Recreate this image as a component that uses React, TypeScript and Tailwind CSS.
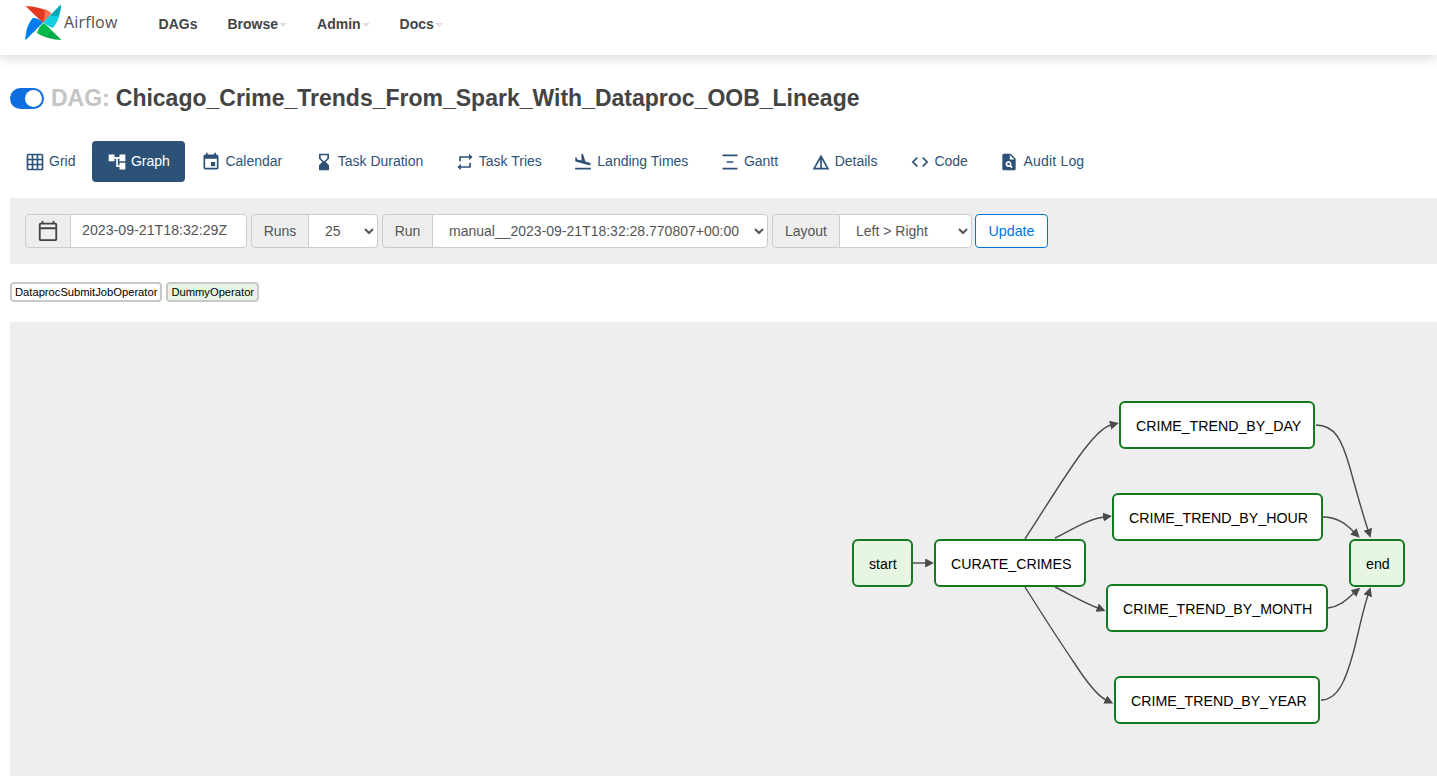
import { MdAccountTree, MdCode, MdDetails, MdEvent, MdFlightLand, MdGridOn, MdHourglassBottom, MdOutlineCalendarToday, MdPlagiarism, MdRepeat } from "react-icons/md";

function GanttIcon({ className }: { className?: string }) {
  return (
    <svg viewBox="0 0 24 24" className={className} fill="currentColor">
      <path d="M3 3h18v2H3zM3 19h18v2H3zM8 11h8v2H8z" />
    </svg>
  );
}

function Logo() {
  return (
    <svg viewBox="0 0 38 37" className="h-[37px] w-[38px]">
      <path d="M0.5 2 L18 19 C21 16 24 12 26 9 C20 5 9 2 0.5 2 Z" fill="#e43921" />
      <path d="M18 19 C21 16 24 12 26 9 C24 7 22 6 20 5 C20 10 19 15 18 19 Z" fill="#f4725a" />
      <path d="M36 0.5 L18.5 18 C21 21 25 23 28 24 C33 18 36 9 36 0.5 Z" fill="#11cfe0" />
      <path d="M36 0.5 L25 11.5 C27 12 30 12 33 12 C35 8 36 4 36 0.5 Z" fill="#00a7b5" />
      <path d="M36.5 36 L19 19 C16 21 13 25 12 29 C18 33 28 36 36.5 36 Z" fill="#00ad46" />
      <path d="M19 19 C22 21 25 24 27 27 L21 32 C17 30 14 29 12 29 C13 25 16 21 19 19 Z" fill="#04d659" opacity="0.35" />
      <path d="M0.5 36 L18 18.5 C15 16 11 14 8 14 C3 19 0.5 27 0.5 36 Z" fill="#0cb6ff" />
      <path d="M0.5 36 L11 25.5 C8 25 5 24 3 24 C1.5 28 0.5 32 0.5 36 Z" fill="#017cee" />
      <path d="M8 14 C11 14 15 16 18 18.5 L9 27.5 L1.5 27 C2.5 22 5 18 8 14 Z" fill="#017cee" />
    </svg>
  );
}

function NavItem({ label, caret }: { label: string; caret?: boolean }) {
  return (
    <div className="flex items-center text-[14px] font-bold text-[#444]">
      {label}
      {caret && <span className="ml-[1px] mt-[2px] h-0 w-0 border-x-[4px] border-t-[4px] border-x-transparent border-t-[#e3dbe5]" />}
    </div>
  );
}

const tabs = [
  { label: "Grid", Icon: MdGridOn },
  { label: "Graph", Icon: MdAccountTree, active: true },
  { label: "Calendar", Icon: MdEvent },
  { label: "Task Duration", Icon: MdHourglassBottom },
  { label: "Task Tries", Icon: MdRepeat },
  { label: "Landing Times", Icon: MdFlightLand },
  { label: "Gantt", Icon: GanttIcon },
  { label: "Details", Icon: MdDetails, extra: "ml-[1px]" },
  { label: "Code", Icon: MdCode, extra: "ml-[1.5px]" },
  { label: "Audit Log", Icon: MdPlagiarism, extra: "tracking-[0.2px]" },
];

function Addon({ children, className }: { children: React.ReactNode; className: string }) {
  return (
    <div className={`flex h-[34px] items-center justify-center rounded-l-[4px] border border-[#ccc] bg-[#eee] text-[14px] text-[#555] ${className}`}>
      {children}
    </div>
  );
}

function Select({ value, className }: { value: string; className: string }) {
  return (
    <select
      defaultValue={value}
      className={`-ml-px h-[34px] rounded-r-[4px] border border-[#ccc] bg-white pl-3 text-[14px] text-[#555] ${className}`}
    >
      <option>{value}</option>
    </select>
  );
}

const nodes = [
  { label: "start", x: 852, y: 539, w: 61, h: 48, tint: true },
  { label: "CURATE_CRIMES", x: 934, y: 539, w: 152, h: 48 },
  { label: "CRIME_TREND_BY_DAY", x: 1119, y: 401, w: 196, h: 48 },
  { label: "CRIME_TREND_BY_HOUR", x: 1112, y: 493, w: 211, h: 48 },
  { label: "CRIME_TREND_BY_MONTH", x: 1106, y: 584, w: 222, h: 48 },
  { label: "CRIME_TREND_BY_YEAR", x: 1114, y: 676, w: 206, h: 48 },
  { label: "end", x: 1349, y: 539, w: 56, h: 48, tint: true },
];

const edges = [
  "M913 563 L926 563",
  "M1025 539 C1047 505 1062 480 1080 455 C1094 436 1103 427 1111 425",
  "M1055 538 C1075 528 1089 519 1104 517",
  "M1055 587 C1071 595 1085 603 1098 608",
  "M1025 587 C1047 622 1060 642 1075 664 C1088 684 1098 696 1106 700",
  "M1316 425 C1335 425 1342 440 1350 468 C1356 490 1362 512 1368 530",
  "M1323 517 C1338 517 1347 525 1354 532",
  "M1328 608 C1340 607 1348 598 1354 593",
  "M1321 700 C1338 700 1346 680 1354 650 C1359 630 1363 610 1368 595",
];

function Graph() {
  return (
    <div className="relative h-[454px] overflow-hidden bg-[#eee]">
      <svg viewBox="10 322 1427 454" className="absolute inset-0 h-[454px] w-[1427px]">
        <defs>
          <marker id="arrow" viewBox="0 0 10 10" refX="1" refY="5" markerWidth="9" markerHeight="9" markerUnits="userSpaceOnUse" orient="auto">
            <path d="M0 0 L10 5 L0 10 Z" fill="#4a4a4a" />
          </marker>
        </defs>
        {edges.map((d) => (
          <path key={d} d={d} fill="none" stroke="#4a4a4a" strokeWidth="1.4" markerEnd="url(#arrow)" />
        ))}
      </svg>
      {nodes.map((n) => (
        <div
          key={n.label}
          className={`absolute flex items-center rounded-[6px] border-2 border-[#15791f] pl-[15px] pt-[4px] text-[14.2px] text-black ${n.tint ? "bg-[#e6f6e2]" : "bg-white"}`}
          style={{ left: n.x - 10, top: n.y - 322, width: n.w, height: n.h }}
        >
          {n.label}
        </div>
      ))}
    </div>
  );
}

export default function App() {
  return (
    <div className="h-[776px] w-[1437px] overflow-hidden bg-white font-['Liberation_Sans',sans-serif]">
      <nav className="relative flex h-[55px] items-start bg-white pl-[25px] shadow-[0_2px_12px_rgba(0,0,0,0.18)]">
        <div className="mt-[4px] flex items-start">
          <Logo />
          <span className="ml-[1px] mt-[6px] font-['Open_Sans',sans-serif] text-[16px] tracking-[0.2px] text-[#51504f]">Airflow</span>
        </div>
        <div className="ml-[41px] flex h-[48px] items-center gap-[30px]">
          <NavItem label="DAGs" />
          <NavItem label="Browse" caret />
          <NavItem label="Admin" caret />
          <NavItem label="Docs" caret />
        </div>
      </nav>

      <div className="pl-[10px]">
        <div className="mt-[29px] flex h-[28px] items-center">
          <div className="flex h-[21px] w-[34px] items-center justify-end rounded-full bg-[#0f6fe0] pr-[2px]">
            <div className="h-[17px] w-[17px] rounded-full bg-white" />
          </div>
          <h2 className="ml-[7px] text-[23px] font-bold text-[#444]">
            <span className="mr-[6px] text-[#c4c4c4]">DAG:</span>
            Chicago_Crime_Trends_From_Spark_With_Dataproc_OOB_Lineage
          </h2>
        </div>

        <div className="mt-[29px] flex h-[41px] gap-[1.5px]">
          {tabs.map(({ label, Icon, active, extra }) => (
            <div
              key={label}
              className={`flex items-center gap-[4px] rounded-[4px] px-[15px] text-[14px] ${active ? "bg-[#2d5278] text-white" : "text-[#2d5278]"} ${extra ?? ""}`}
            >
              <Icon className="h-5 w-5" />
              {label}
            </div>
          ))}
        </div>

        <div className="mt-[16px] flex h-[66px] items-center bg-[#eee] pl-[15px]">
          <Addon className="w-[46px]">
            <MdOutlineCalendarToday className="h-[22px] w-[22px] text-[#444]" />
          </Addon>
          <div className="-ml-px flex h-[34px] w-[177px] items-center rounded-r-[4px] border border-[#ccc] bg-white pl-[11px] text-[14.2px] text-[#555]">
            2023-09-21T18:32:29Z
          </div>
          <Addon className="ml-[4px] w-[58px]">Runs</Addon>
          <Select value="25" className="w-[70px]" />
          <Addon className="ml-[4px] w-[51px]">Run</Addon>
          <Select value="manual__2023-09-21T18:32:28.770807+00:00" className="w-[336px]" />
          <Addon className="ml-[4px] w-[68px]">Layout</Addon>
          <Select value="Left > Right" className="w-[133px]" />
          <button className="ml-[3px] h-[34px] w-[73px] rounded-[4px] border border-[#0275d8] bg-white pt-px text-[14.3px] text-[#0275d8]">Update</button>
        </div>

        <div className="mt-[18px] flex h-[20px] gap-[4px]">
          <span className="flex items-center rounded-[4px] border-2 border-[#c8c8c8] bg-white px-[3px] text-[11.2px] text-black">DataprocSubmitJobOperator</span>
          <span className="flex items-center rounded-[4px] border-2 border-[#c8c8c8] bg-[#e6f6e2] px-[3px] text-[11.2px] text-black">DummyOperator</span>
        </div>

        <div className="mt-[20px]">
          <Graph />
        </div>
      </div>
    </div>
  );
}
